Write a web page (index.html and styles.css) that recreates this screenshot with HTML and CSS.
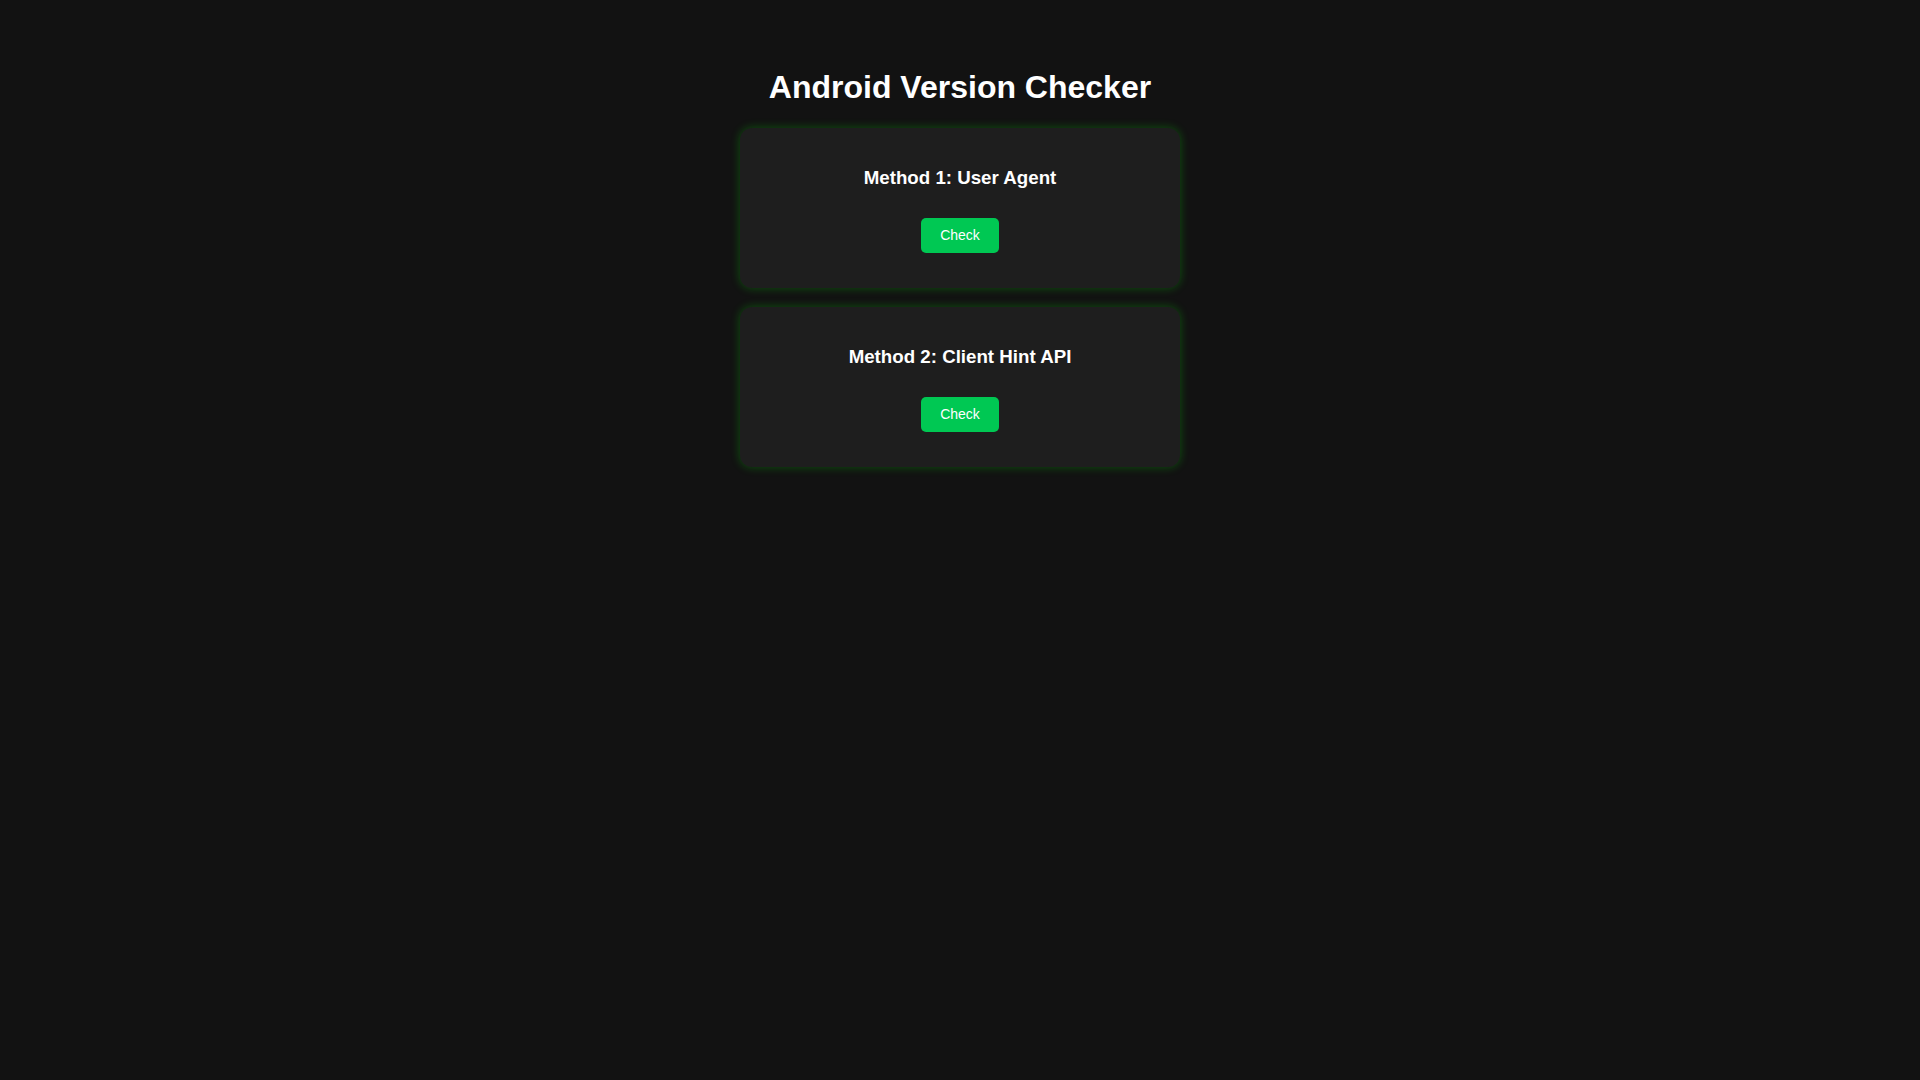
FILE: index.html
```html
<!DOCTYPE html>
<html lang="en">
<head>
<meta charset="utf-8">
<title>Android Version Checker</title>
<link rel="stylesheet" href="styles.css">
</head>
<body>
<div class="container">
  <h1 class="title">Android Version Checker</h1>
  <div class="card">
    <h3 class="card-title">Method 1: User Agent</h3>
    <button class="check-btn">Check</button>
    <div class="result"></div>
  </div>
  <div class="card">
    <h3 class="card-title">Method 2: Client Hint API</h3>
    <button class="check-btn">Check</button>
    <div class="result"></div>
  </div>
</div>
</body>
</html>
```
FILE: styles.css
```css
html, body {
  margin: 0;
  padding: 0;
  background: #121212;
  color: #ffffff;
  font-family: "Liberation Sans", Arial, sans-serif;
}
.container {
  width: 440px;
  margin: 0 auto;
  padding-top: 47px;
  display: flex;
  flex-direction: column;
  align-items: stretch;
}
.title {
  margin: 21.5px 0 22.5px;
  font-size: 32px;
  font-weight: bold;
  text-align: center;
  line-height: 37px;
}
.card {
  background: #1e1e1e;
  border-radius: 12px;
  box-shadow: 0 0 10px rgba(0, 255, 0, 0.28);
  padding: 20px;
  margin-bottom: 19px;
  height: 160px;
  box-sizing: border-box;
  display: flex;
  flex-direction: column;
  align-items: center;
}
.card-title {
  margin: 18.7px 0;
  font-size: 18.72px;
  line-height: 21.5px;
  font-weight: bold;
}
.check-btn {
  margin-top: 11px;
  background: #00c853;
  color: #ffffff;
  border: none;
  border-radius: 5px;
  padding: 9px 19px;
  font-family: "Liberation Sans", Arial, sans-serif;
  font-size: 14px;
  line-height: 17px;
}
.result {
  margin-top: 15px;
}
```
